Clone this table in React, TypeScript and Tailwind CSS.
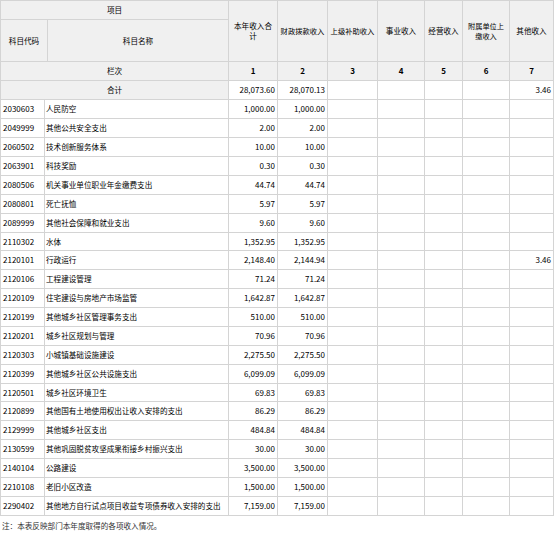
import { Fragment } from "react";

const rows: string[][] = [
  ["2030603", "人民防空", "1,000.00", "1,000.00", ""],
  ["2049999", "其他公共安全支出", "2.00", "2.00", ""],
  ["2060502", "技术创新服务体系", "10.00", "10.00", ""],
  ["2063901", "科技奖励", "0.30", "0.30", ""],
  ["2080506", "机关事业单位职业年金缴费支出", "44.74", "44.74", ""],
  ["2080801", "死亡抚恤", "5.97", "5.97", ""],
  ["2089999", "其他社会保障和就业支出", "9.60", "9.60", ""],
  ["2110302", "水体", "1,352.95", "1,352.95", ""],
  ["2120101", "行政运行", "2,148.40", "2,144.94", "3.46"],
  ["2120106", "工程建设管理", "71.24", "71.24", ""],
  ["2120109", "住宅建设与房地产市场监管", "1,642.87", "1,642.87", ""],
  ["2120199", "其他城乡社区管理事务支出", "510.00", "510.00", ""],
  ["2120201", "城乡社区规划与管理", "70.96", "70.96", ""],
  ["2120303", "小城镇基础设施建设", "2,275.50", "2,275.50", ""],
  ["2120399", "其他城乡社区公共设施支出", "6,099.09", "6,099.09", ""],
  ["2120501", "城乡社区环境卫生", "69.83", "69.83", ""],
  ["2120899", "其他国有土地使用权出让收入安排的支出", "86.29", "86.29", ""],
  ["2129999", "其他城乡社区支出", "484.84", "484.84", ""],
  ["2130599", "其他巩固脱贫攻坚成果衔接乡村振兴支出", "30.00", "30.00", ""],
  ["2140104", "公路建设", "3,500.00", "3,500.00", ""],
  ["2210108", "老旧小区改造", "1,500.00", "1,500.00", ""],
  ["2290402", "其他地方自行试点项目收益专项债券收入安排的支出", "7,159.00", "7,159.00", ""],
];

const head = "bg-[#f0f0f0] flex items-center justify-center text-center leading-[10px]";
const num = "bg-white flex items-center justify-end pr-[2px] whitespace-nowrap text-[8px]";

export default function App() {
  return (
    <div
      className="w-[554px] bg-white text-black text-[7.6px]"
      style={{ fontFamily: '"Noto Sans CJK SC", "Liberation Sans", sans-serif' }}
    >
      {/* ── header ── */}
      <div className="grid grid-cols-[46px_180px_48px_49px_49px_46px_37px_46px_43px] grid-rows-[18px_41px_18px_18px] gap-px p-px bg-[#d4d4d4]">
        <div className={`${head} col-span-2`}>项目</div>
        <div className={`${head} row-span-2`}>本年收入合<br />计</div>
        <div className={`${head} row-span-2 whitespace-nowrap text-[7.3px]`}>财政拨款收入</div>
        <div className={`${head} row-span-2 whitespace-nowrap text-[7.3px]`}>上级补助收入</div>
        <div className={`${head} row-span-2`}>事业收入</div>
        <div className={`${head} row-span-2`}>经营收入</div>
        <div className={`${head} row-span-2 whitespace-nowrap text-[7.2px]`}>附属单位上<br />缴收入</div>
        <div className={`${head} row-span-2`}>其他收入</div>
        <div className={head}>科目代码</div>
        <div className={head}>科目名称</div>

        <div className={`${head} col-span-2`}>栏次</div>
        {["1", "2", "3", "4", "5", "6", "7"].map((n) => (
          <div key={n} className={`${head} font-bold text-[8px]`}>{n}</div>
        ))}

        <div className={`${head} col-span-2`}>合计</div>
        <div className={num}>28,073.60</div>
        <div className={num}>28,070.13</div>
        <div className={num} />
        <div className={num} />
        <div className={num} />
        <div className={num} />
        <div className={num}>3.46</div>
      </div>

      {/* ── body ── */}
      <div className="grid grid-cols-[43px_183px_48px_49px_49px_46px_37px_46px_43px] grid-rows-[repeat(7,18px)_17px_repeat(7,18px)_17px_repeat(6,18px)] gap-px px-px pb-px bg-[#d4d4d4]">
        {rows.map((r) => (
          <Fragment key={r[0]}>
            <div className="bg-white flex items-center pl-[2px] whitespace-nowrap text-[8px]">{r[0]}</div>
            <div className="bg-white flex items-center pl-[1px] whitespace-nowrap overflow-hidden">{r[1]}</div>
            <div className={num}>{r[2]}</div>
            <div className={num}>{r[3]}</div>
            <div className={num} />
            <div className={num} />
            <div className={num} />
            <div className={num} />
            <div className={num}>{r[4]}</div>
          </Fragment>
        ))}
      </div>

      <p className="pl-[2px] pt-[4px] text-[#333]">注：本表反映部门本年度取得的各项收入情况。</p>
    </div>
  );
}
